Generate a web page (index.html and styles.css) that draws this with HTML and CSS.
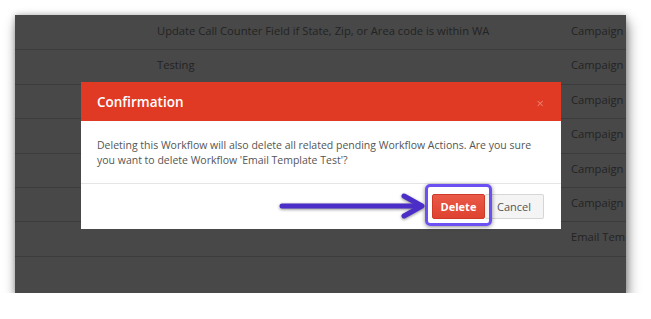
FILE: index.html
```html
<!DOCTYPE html>
<html>
<head>
<meta charset="utf-8">
<link rel="stylesheet" href="styles.css">
</head>
<body>
<div class="frame">
  <div class="rows">
    <div class="row first"><span class="name">Update Call Counter Field if State, Zip, or Area code is within WA</span><span class="type">Campaign</span></div>
    <div class="row"><span class="name">Testing</span><span class="type">Campaign</span></div>
    <div class="row"><span class="name"></span><span class="type">Campaign</span></div>
    <div class="row"><span class="name"></span><span class="type">Campaign</span></div>
    <div class="row"><span class="name"></span><span class="type">Campaign</span></div>
    <div class="row"><span class="name"></span><span class="type">Campaign</span></div>
    <div class="row"><span class="name"></span><span class="type">Email Template</span></div>
    <div class="row last"><span class="name"></span><span class="type"></span></div>
  </div>

  <div class="modal">
    <div class="modal-header">
      <span class="modal-title">Confirmation</span>
      <span class="modal-close">&times;</span>
    </div>
    <div class="modal-body">Deleting this Workflow will also delete all related pending Workflow Actions. Are you sure you want to delete Workflow 'Email Template Test'?</div>
    <div class="modal-footer">
      <button class="btn btn-delete">Delete</button>
      <button class="btn btn-cancel">Cancel</button>
    </div>
    <div class="highlight"></div>
    <svg class="arrow" width="160" height="34" viewBox="0 0 160 34">
      <line x1="4" y1="17" x2="142" y2="17" stroke="#4b2dc8" stroke-width="5" stroke-linecap="round"/>
      <polyline points="126,7 144,17 126,27" fill="none" stroke="#4b2dc8" stroke-width="5" stroke-linecap="round" stroke-linejoin="round"/>
    </svg>
  </div>
</div>
</body>
</html>
```

FILE: styles.css
```css
html, body {
  margin: 0;
  padding: 0;
  background: #ffffff;
}

body {
  font-family: "Open Sans", "Liberation Sans", sans-serif;
}

.frame {
  position: relative;
  margin: 15px 0 0 15px;
  width: 611px;
  height: 278px;
  background: #484848;
  overflow: hidden;
  box-shadow: 2px 7px 12px rgba(0, 0, 0, 0.45), 0 0 6px rgba(0, 0, 0, 0.25);
}

.rows {
  display: flex;
  flex-direction: column;
  padding-top: 1px;
}

.row {
  box-sizing: border-box;
  height: 34.4px;
  border-bottom: 1px solid #3c3c3c;
  display: flex;
  align-items: flex-start;
  padding-top: 7px;
  font-size: 11.2px;
  line-height: 16px;
  color: #232323;
  white-space: nowrap;
}

.row.last {
  border-bottom: none;
}

.name {
  margin-left: 142px;
  width: 414px;
  flex: none;
}

.type {
  flex: none;
}

.modal {
  position: absolute;
  left: 66px;
  top: 67px;
  width: 480px;
  background: #ffffff;
}

.modal-header {
  box-sizing: border-box;
  height: 39px;
  background: #e03a24;
  display: flex;
  align-items: center;
  justify-content: space-between;
  padding: 0 16px;
}

.modal-title {
  color: #ffffff;
  font-size: 13.5px;
  font-weight: 600;
}

.modal-close {
  color: #ee8a7c;
  font-size: 13px;
  line-height: 1;
  margin-right: 1px;
  margin-top: 3px;
  opacity: 0.85;
}

.modal-body {
  padding: 17px 16px 16px 16px;
  font-size: 10.5px;
  line-height: 14.5px;
  color: #555555;
  height: 29px;
}

.modal-footer {
  border-top: 1px solid #e5e5e5;
  height: 46px;
  box-sizing: border-box;
  display: flex;
  justify-content: flex-end;
  align-items: flex-start;
  padding: 10px 17px 0 0;
}

.btn {
  box-sizing: border-box;
  height: 25px;
  font-family: "Open Sans", "Liberation Sans", sans-serif;
  font-size: 11px;
  padding: 0;
  margin: 0;
  border-radius: 2px;
  cursor: pointer;
}

.btn-delete {
  width: 53px;
  background: linear-gradient(#ea5a48, #df4230);
  border: 1px solid #cf3a28;
  color: #ffffff;
  font-weight: 700;
}

.btn-cancel {
  width: 59px;
  background: #f4f4f4;
  border: 1px solid #d6d6d6;
  border-left: none;
  color: #555555;
}

.highlight {
  position: absolute;
  left: 344px;
  top: 102px;
  width: 67px;
  height: 42px;
  box-sizing: border-box;
  border: 3px solid #6d50f2;
  border-radius: 5px;
  box-shadow: 0 1px 4px rgba(0, 0, 0, 0.45);
}

.arrow {
  position: absolute;
  left: 197px;
  top: 107px;
  filter: drop-shadow(0 1px 1.5px rgba(0, 0, 0, 0.45));
}
```
